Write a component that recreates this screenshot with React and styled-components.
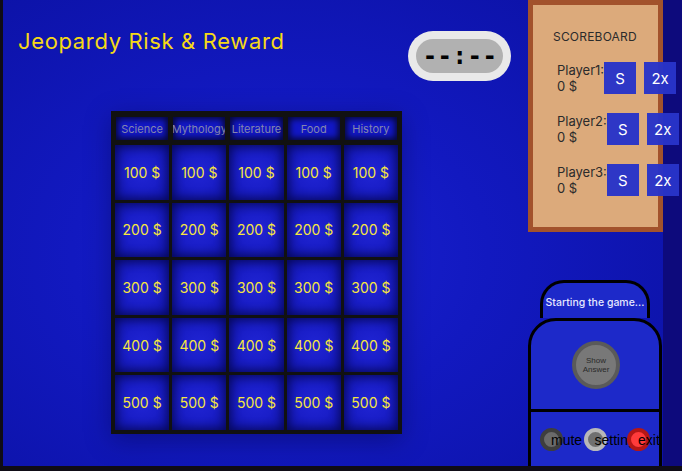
import React from "react";
import styled, { createGlobalStyle } from "styled-components";

const Global = createGlobalStyle`
  html, body { margin: 0; padding: 0; }
  body {
    background: #0f0c16;
    font-family: "Inter", "DejaVu Sans", sans-serif;
    overflow: hidden;
  }
`;

const Frame = styled.div`
  width: 679px;
  height: 466px;
  margin-left: 3px;
  display: flex;
  background: #0d0a7c;
  overflow: hidden;
`;

const Main = styled.div`
  width: 660px;
  height: 466px;
  display: grid;
  grid-template-columns: 525px 135px;
  background: radial-gradient(ellipse 70% 75% at 42% 55%, #1a22d2 0%, #1219c0 45%, #0c12a6 100%);
`;

const LeftPane = styled.div`
  display: flex;
  flex-direction: column;
`;

const Header = styled.div`
  display: flex;
  justify-content: space-between;
  align-items: flex-start;
  padding: 31px 17px 0 15px;
`;

const Title = styled.h1`
  margin: 0;
  margin-top: -3px;
  font-size: 22px;
  font-weight: 400;
  color: #f5d916;
  letter-spacing: 0.65px;
`;

const TimerOuter = styled.div`
  width: 103px;
  height: 50px;
  box-sizing: border-box;
  padding: 8px;
  border-radius: 25px;
  background: #e9e9e9;
`;

const TimerInner = styled.div`
  height: 100%;
  border-radius: 17px;
  background: #b1b1b1;
  display: flex;
  align-items: center;
  justify-content: center;
  font-family: "DejaVu Sans Mono", monospace;
  font-weight: 700;
  font-size: 24px;
  letter-spacing: 0.5px;
  color: #000;
  padding-left: 1px;
`;

const Board = styled.div`
  margin: 30px 0 0 108px;
  width: 291px;
  box-sizing: border-box;
  padding: 4px;
  background: #111;
  display: grid;
  grid-template-columns: repeat(5, 1fr);
  grid-template-rows: 27px repeat(5, 54.6px);
  gap: 3px;
  box-shadow: 0 6px 24px rgba(0, 0, 40, 0.35);
`;

const Category = styled.div`
  margin: 2px 1px;
  background: #1217c6;
  box-shadow: inset 0 0 6px 2px rgba(0, 0, 0, 0.75);
  display: flex;
  align-items: center;
  justify-content: center;
  font-size: 11px;
  color: #8486ac;
  white-space: nowrap;
  overflow: hidden;
`;

const Cell = styled.div`
  background: radial-gradient(circle at 50% 50%, #2024d4 0%, #1a1ec8 45%, #0e12a6 100%);
  box-shadow: inset 0 0 10px 2px rgba(0, 0, 30, 0.55);
  display: flex;
  align-items: center;
  justify-content: center;
  font-size: 14px;
  font-weight: 400;
  color: #f6e640;
  white-space: nowrap;
`;

const RightPane = styled.div`
  display: flex;
  flex-direction: column;
  align-items: flex-start;
`;

const Scoreboard = styled.div`
  width: 135px;
  height: 232px;
  box-sizing: border-box;
  border: 5px solid #a2522c;
  background: #dcaa7b;
  padding: 24px 0 0 20px;
  color: #2b2b2b;
`;

const ScoreTitle = styled.div`
  font-size: 12px;
  letter-spacing: 0.2px;
  margin-bottom: 18px;
`;

const PlayerList = styled.div`
  display: flex;
  flex-direction: column;
  gap: 19px;
  padding-left: 4px;
`;

const PlayerRow = styled.div`
  display: flex;
  align-items: center;
  height: 32px;
`;

const PlayerInfo = styled.div`
  font-size: 13px;
  line-height: 16px;
  white-space: nowrap;
`;

const ScoreBtn = styled.div`
  flex: none;
  width: 32px;
  height: 32px;
  margin-left: ${(p) => p.$gap}px;
  background: rgba(40, 52, 200, 0.97);
  color: #fff;
  font-size: 15px;
  display: flex;
  align-items: center;
  justify-content: center;
`;

const Controller = styled.div`
  margin-top: 48px;
  width: 134px;
  display: flex;
  flex-direction: column;
  align-items: center;
`;

const Tab = styled.div`
  width: 110px;
  height: 38px;
  box-sizing: border-box;
  border: 3px solid #000;
  border-bottom: none;
  border-radius: 24px 24px 0 0;
  background: #1d29c9;
  display: flex;
  align-items: center;
  justify-content: center;
  font-size: 10.5px;
  font-weight: 500;
  color: #e6e8ff;
  padding-top: 3px;
  white-space: nowrap;
`;

const Body = styled.div`
  width: 134px;
  height: 160px;
  box-sizing: border-box;
  border: 3px solid #000;
  border-radius: 28px 28px 0 0;
  background: #1d29c9;
  display: flex;
  flex-direction: column;
`;

const AnswerArea = styled.div`
  height: 88px;
  display: flex;
  align-items: center;
  justify-content: center;
  border-bottom: 3px solid #000;
`;

const AnswerBtn = styled.div`
  width: 48px;
  height: 48px;
  box-sizing: border-box;
  border-radius: 50%;
  border: 4px solid #5a5a5a;
  background: #787878;
  display: flex;
  align-items: center;
  justify-content: center;
  text-align: center;
  font-family: "Liberation Sans", Arial, sans-serif;
  font-size: 8px;
  line-height: 9px;
  color: #2a2a2a;
  margin-left: 2px;
`;

const ControlRow = styled.div`
  display: grid;
  grid-template-columns: repeat(3, 43.5px);
  padding: 16px 0 0 9px;
`;

const Control = styled.div`
  display: flex;
  align-items: center;
`;

const Knob = styled.div`
  flex: none;
  width: 23px;
  height: 23px;
  box-sizing: border-box;
  border-radius: 50%;
  border: 4px solid ${(p) => p.$ring};
  background: ${(p) => p.$fill};
  position: relative;
  z-index: ${(p) => p.$z};
`;

const Label = styled.span`
  margin-left: -12px;
  font-family: "Liberation Sans", Arial, sans-serif;
  font-size: 14px;
  color: #000;
  position: relative;
  z-index: ${(p) => p.$z};
  white-space: nowrap;
`;

const categories = ["Science", "Mythology", "Literature", "Food", "History"];
const values = [100, 200, 300, 400, 500];
const players = [
  { name: "Player1:", gap: 0, gap2: 8 },
  { name: "Player2:", gap: 0, gap2: 8 },
  { name: "Player3:", gap: 0, gap2: 8 },
];
const controls = [
  { label: "mute", ring: "#3e3e3e", fill: "#6a6a6a" },
  { label: "setting", ring: "#b8b8b8", fill: "#707070" },
  { label: "exit", ring: "#b51616", fill: "#ff3b3b" },
];

export default function App() {
  return (
    <>
      <Global />
      <Frame>
        <Main>
          <LeftPane>
            <Header>
              <Title>Jeopardy Risk &amp; Reward</Title>
              <TimerOuter>
                <TimerInner>--:--</TimerInner>
              </TimerOuter>
            </Header>
            <Board>
              {categories.map((c) => (
                <Category key={c}>{c}</Category>
              ))}
              {values.map((v) =>
                categories.map((c) => <Cell key={c + v}>{v} $</Cell>)
              )}
            </Board>
          </LeftPane>
          <RightPane>
            <Scoreboard>
              <ScoreTitle>SCOREBOARD</ScoreTitle>
              <PlayerList>
                {players.map((p) => (
                  <PlayerRow key={p.name}>
                    <PlayerInfo>
                      {p.name}
                      <br />0 $
                    </PlayerInfo>
                    <ScoreBtn $gap={p.gap}>S</ScoreBtn>
                    <ScoreBtn $gap={p.gap2}>2x</ScoreBtn>
                  </PlayerRow>
                ))}
              </PlayerList>
            </Scoreboard>
            <Controller>
              <Tab>Starting the game...</Tab>
              <Body>
                <AnswerArea>
                  <AnswerBtn>
                    Show
                    <br />
                    Answer
                  </AnswerBtn>
                </AnswerArea>
                <ControlRow>
                  {controls.map((c, i) => (
                    <Control key={c.label}>
                      <Knob $ring={c.ring} $fill={c.fill} $z={i * 2 + 1} />
                      <Label $z={i * 2 + 2}>{c.label}</Label>
                    </Control>
                  ))}
                </ControlRow>
              </Body>
            </Controller>
          </RightPane>
        </Main>
      </Frame>
    </>
  );
}
